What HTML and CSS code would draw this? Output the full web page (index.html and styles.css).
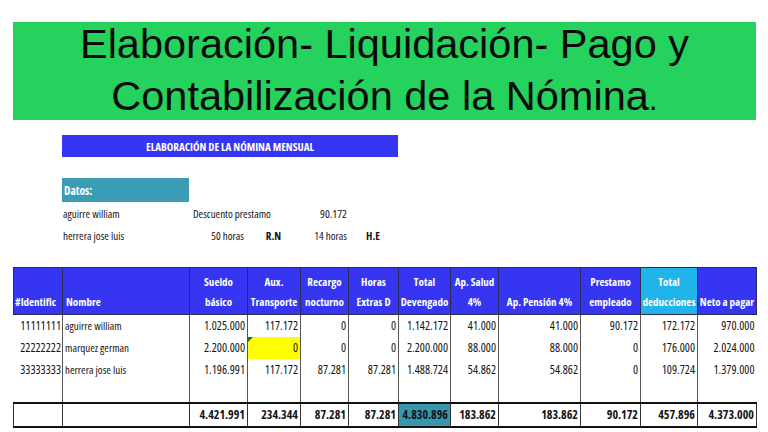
FILE: index.html
```html
<!DOCTYPE html>
<html lang="es">
<head>
<meta charset="utf-8">
<title>Nómina</title>
<link rel="stylesheet" href="styles.css">
</head>
<body>
<div class="page">
  <h1 class="title"><span>Elaboración- Liquidación- Pago y<br>Contabilización de la Nómina<span class="dot">.</span></span></h1>

  <div class="banner">ELABORACIÓN DE LA NÓMINA MENSUAL</div>

  <section class="datos">
    <div class="datos-head">Datos:</div>
    <div class="d-name r2">aguirre william</div>
    <div class="d-desc r2">Descuento prestamo</div>
    <div class="d-c5 r2">90.172</div>
    <div class="d-name r3">herrera jose luis</div>
    <div class="d-c3 r3">50 horas</div>
    <div class="d-c4 r3 strong">R.N</div>
    <div class="d-c5 r3">14 horas</div>
    <div class="d-c6 r3 strong">H.E</div>
  </section>

  <table class="nomina">
    <colgroup>
      <col style="width:49px"><col style="width:127px"><col style="width:58px"><col style="width:53px">
      <col style="width:48px"><col style="width:50px"><col style="width:52px"><col style="width:48px">
      <col style="width:82px"><col style="width:60px"><col style="width:57px"><col style="width:59px">
    </colgroup>
    <thead>
      <tr>
        <th class="left">#Identific</th>
        <th class="left name-h">Nombre</th>
        <th>Sueldo<br>básico</th>
        <th>Aux.<br>Transporte</th>
        <th>Recargo<br>nocturno</th>
        <th>Horas<br>Extras D</th>
        <th>Total<br>Devengado</th>
        <th>Ap. Salud<br>4%</th>
        <th>Ap. Pensión 4%</th>
        <th>Prestamo<br>empleado</th>
        <th class="cyan">Total<br>deducciones</th>
        <th>Neto a pagar</th>
      </tr>
    </thead>
    <tbody>
      <tr>
        <td class="id">11111111</td><td class="name">aguirre william</td><td>1.025.000</td><td>117.172</td><td>0</td><td>0</td><td>1.142.172</td><td>41.000</td><td>41.000</td><td>90.172</td><td>172.172</td><td class="last">970.000</td>
      </tr>
      <tr>
        <td class="id">22222222</td><td class="name">marquez german</td><td>2.200.000</td><td class="hl"><span class="flag"></span>0</td><td>0</td><td>0</td><td>2.200.000</td><td>88.000</td><td>88.000</td><td>0</td><td>176.000</td><td class="last">2.024.000</td>
      </tr>
      <tr>
        <td class="id">33333333</td><td class="name">herrera jose luis</td><td>1.196.991</td><td>117.172</td><td>87.281</td><td>87.281</td><td>1.488.724</td><td>54.862</td><td>54.862</td><td>0</td><td>109.724</td><td class="last">1.379.000</td>
      </tr>
      <tr class="blank">
        <td class="id"></td><td class="name"></td><td></td><td></td><td></td><td></td><td></td><td></td><td></td><td></td><td></td><td class="last"></td>
      </tr>
      <tr class="total">
        <td></td><td></td><td>4.421.991</td><td>234.344</td><td>87.281</td><td>87.281</td><td class="teal">4.830.896</td><td>183.862</td><td>183.862</td><td>90.172</td><td>457.896</td><td>4.373.000</td>
      </tr>
    </tbody>
  </table>
</div>
</body>
</html>
```

FILE: styles.css
```css
html, body {
  margin: 0;
  padding: 0;
  background: #ffffff;
}

body {
  font-family: "Open Sans", "Liberation Sans", Arial, sans-serif;
  font-stretch: 75%;
  color: #141414;
}

.page {
  width: 768px;
  height: 432px;
  padding-top: 22px;
  box-sizing: border-box;
  overflow: hidden;
}

.title {
  margin: 0 0 0 13px;
  width: 743px;
  height: 98px;
  background: #24d25d;
  display: flex;
  align-items: center;
  justify-content: center;
  text-align: center;
  font-family: "Liberation Sans", Arial, sans-serif;
  font-stretch: normal;
  font-weight: normal;
  font-size: 41.5px;
  line-height: 52px;
  color: #0a0a0a;
}

.title .dot {
  font-size: 32px;
}

.banner {
  margin: 15px 0 0 62px;
  width: 336px;
  height: 22px;
  background: #3636f2;
  color: #ffffff;
  font-weight: bold;
  font-size: 11px;
  display: flex;
  align-items: center;
  justify-content: center;
}

.datos {
  margin: 21px 0 0 13px;
  display: grid;
  grid-template-columns: 49px 127px 58px 53px 48px 50px;
  grid-template-rows: 24px 22px 23px;
  font-size: 11px;
  align-items: center;
}

.datos-head {
  grid-column: 2;
  grid-row: 1;
  align-self: stretch;
  background: #3a9db5;
  color: #ffffff;
  font-weight: bold;
  font-size: 11.5px;
  display: flex;
  align-items: center;
  padding-left: 2px;
}

.r2 { grid-row: 2; }
.r3 { grid-row: 3; }

.d-name { grid-column: 2; padding-left: 1px; white-space: nowrap; }
.d-desc { grid-column: 3 / span 2; padding-left: 4px; white-space: nowrap; }
.d-c3 { grid-column: 3; text-align: right; padding-right: 3px; white-space: nowrap; }
.d-c4 { grid-column: 4; text-align: center; }
.d-c5 { grid-column: 5; text-align: right; padding-right: 1px; white-space: nowrap; }
.d-c6 { grid-column: 6; text-align: center; }
.d-c5.r2 { font-size: 11.5px; }
.strong { font-weight: bold; }

.nomina {
  margin: 20px 0 0 13px;
  width: 743px;
  table-layout: fixed;
  border-collapse: collapse;
  font-size: 12px;
}

.nomina th {
  height: 44px;
  padding: 0 1px 2px;
  vertical-align: bottom;
  line-height: 20px;
  background: #3636f2;
  color: #ffffff;
  font-weight: bold;
  font-size: 11px;
  text-align: center;
  border: 1px solid #2a2a55;
  white-space: nowrap;
  overflow: hidden;
}

.nomina th.left {
  text-align: left;
  padding-left: 1px;
}

.nomina th.name-h {
  padding-left: 3px;
}

.nomina th.cyan {
  background: #20b4ea;
}

.nomina td {
  height: 22px;
  padding: 0 2px 0 1px;
  line-height: 22px;
  text-align: right;
  border-left: 1px solid #555555;
  border-right: 1px solid #555555;
  white-space: nowrap;
  overflow: hidden;
}

.nomina td.id {
  border-left: none;
  padding-right: 1px;
}

.nomina td.name {
  text-align: left;
  padding-left: 2px;
  font-size: 11px;
}

.nomina td.last {
  border-right: none;
}

.nomina td.hl {
  position: relative;
  background: #ffff00;
}

.flag {
  position: absolute;
  top: 0;
  left: 0;
  width: 0;
  height: 0;
  border-top: 5px solid #1f6f2a;
  border-right: 5px solid transparent;
}

.nomina tr.blank td {
  height: 21px;
}

.nomina tr.total td {
  font-weight: bold;
  border-top: 2px solid #111111;
  border-bottom: 2px solid #111111;
  border-left: 1px solid #333333;
  border-right: 1px solid #333333;
}

.nomina td.teal {
  background: #3896ad;
}
```
